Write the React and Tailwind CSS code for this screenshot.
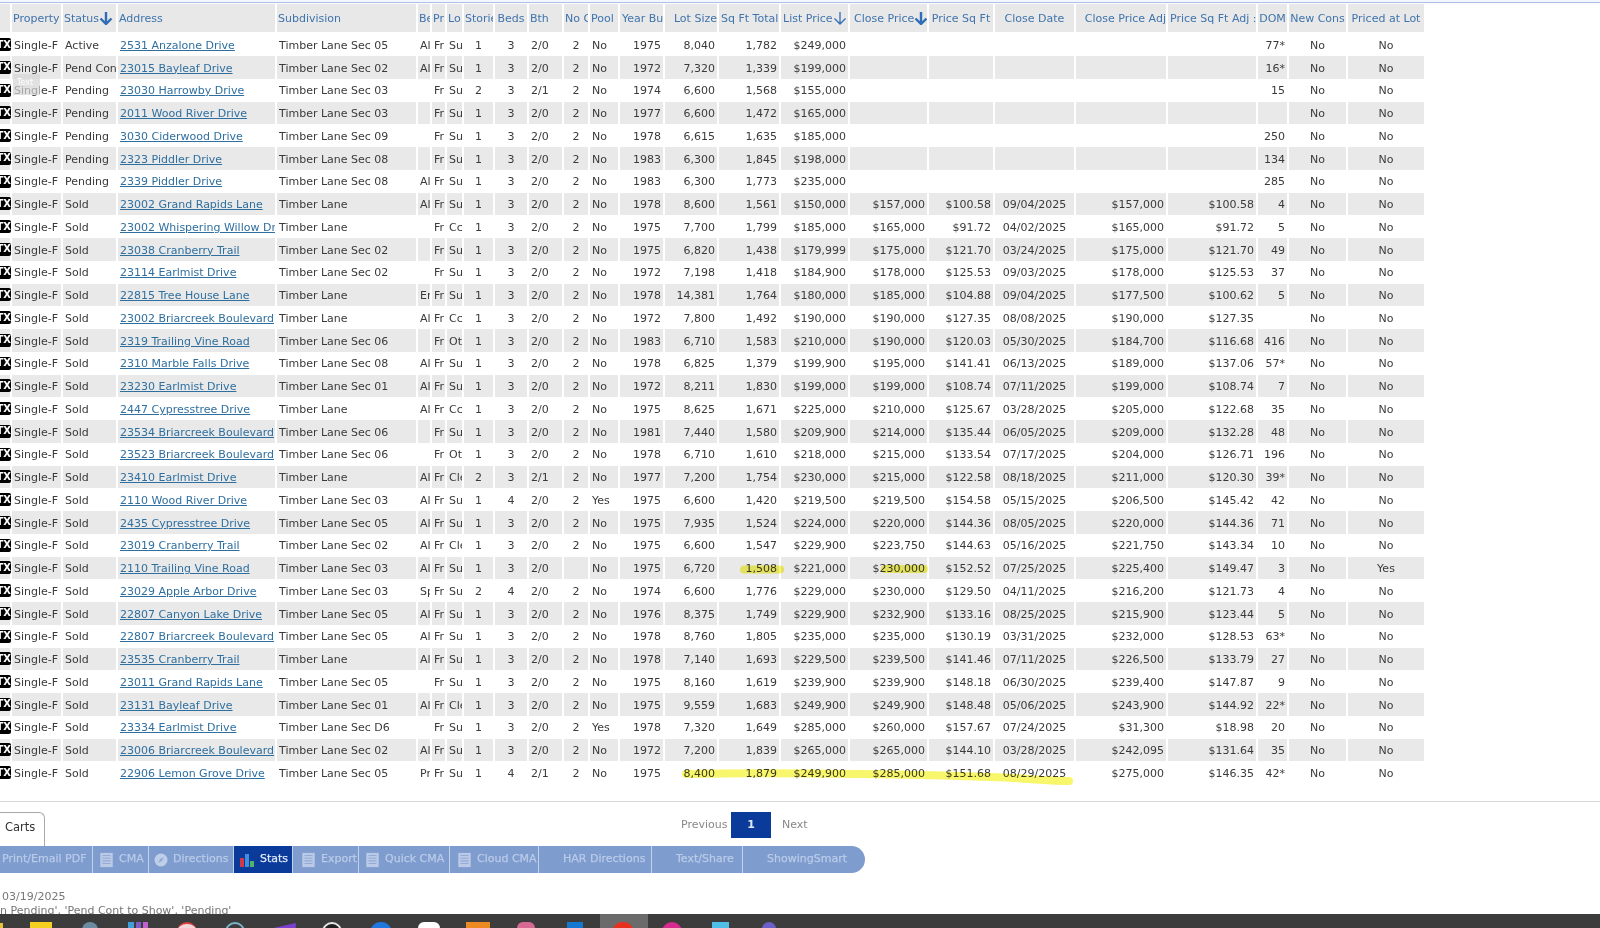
import React from "react";

const raw = `Active|2531 Anzalone Drive|Timber Lane Sec 05|All|Sub|1|3|2/0|2|No|1975|8,040|1,782|$249,000||||||77*|No
Pend Cont to Show|23015 Bayleaf Drive|Timber Lane Sec 02|All|Sub|1|3|2/0|2|No|1972|7,320|1,339|$199,000||||||16*|No
Pending|23030 Harrowby Drive|Timber Lane Sec 03||Sub|2|3|2/1|2|No|1974|6,600|1,568|$155,000||||||15|No
Pending|2011 Wood River Drive|Timber Lane Sec 03||Sub|1|3|2/0|2|No|1977|6,600|1,472|$165,000|||||||No
Pending|3030 Ciderwood Drive|Timber Lane Sec 09||Sub|1|3|2/0|2|No|1978|6,615|1,635|$185,000||||||250|No
Pending|2323 Piddler Drive|Timber Lane Sec 08||Sub|1|3|2/0|2|No|1983|6,300|1,845|$198,000||||||134|No
Pending|2339 Piddler Drive|Timber Lane Sec 08|All|Sub|1|3|2/0|2|No|1983|6,300|1,773|$235,000||||||285|No
Sold|23002 Grand Rapids Lane|Timber Lane|All|Sub|1|3|2/0|2|No|1978|8,600|1,561|$150,000|$157,000|$100.58|09/04/2025|$157,000|$100.58|4|No
Sold|23002 Whispering Willow Drive|Timber Lane||Cc|1|3|2/0|2|No|1975|7,700|1,799|$185,000|$165,000|$91.72|04/02/2025|$165,000|$91.72|5|No
Sold|23038 Cranberry Trail|Timber Lane Sec 02||Sub|1|3|2/0|2|No|1975|6,820|1,438|$179,999|$175,000|$121.70|03/24/2025|$175,000|$121.70|49|No
Sold|23114 Earlmist Drive|Timber Lane Sec 02||Sub|1|3|2/0|2|No|1972|7,198|1,418|$184,900|$178,000|$125.53|09/03/2025|$178,000|$125.53|37|No
Sold|22815 Tree House Lane|Timber Lane|Er|Sub|1|3|2/0|2|No|1978|14,381|1,764|$180,000|$185,000|$104.88|09/04/2025|$177,500|$100.62|5|No
Sold|23002 Briarcreek Boulevard|Timber Lane|All|Cc|1|3|2/0|2|No|1972|7,800|1,492|$190,000|$190,000|$127.35|08/08/2025|$190,000|$127.35||No
Sold|2319 Trailing Vine Road|Timber Lane Sec 06||Ot|1|3|2/0|2|No|1983|6,710|1,583|$210,000|$190,000|$120.03|05/30/2025|$184,700|$116.68|416|No
Sold|2310 Marble Falls Drive|Timber Lane Sec 08|All|Sub|1|3|2/0|2|No|1978|6,825|1,379|$199,900|$195,000|$141.41|06/13/2025|$189,000|$137.06|57*|No
Sold|23230 Earlmist Drive|Timber Lane Sec 01|All|Sub|1|3|2/0|2|No|1972|8,211|1,830|$199,000|$199,000|$108.74|07/11/2025|$199,000|$108.74|7|No
Sold|2447 Cypresstree Drive|Timber Lane|All|Cc|1|3|2/0|2|No|1975|8,625|1,671|$225,000|$210,000|$125.67|03/28/2025|$205,000|$122.68|35|No
Sold|23534 Briarcreek Boulevard|Timber Lane Sec 06||Sub|1|3|2/0|2|No|1981|7,440|1,580|$209,900|$214,000|$135.44|06/05/2025|$209,000|$132.28|48|No
Sold|23523 Briarcreek Boulevard|Timber Lane Sec 06||Ot|1|3|2/0|2|No|1978|6,710|1,610|$218,000|$215,000|$133.54|07/17/2025|$204,000|$126.71|196|No
Sold|23410 Earlmist Drive|Timber Lane|All|Cle|2|3|2/1|2|No|1977|7,200|1,754|$230,000|$215,000|$122.58|08/18/2025|$211,000|$120.30|39*|No
Sold|2110 Wood River Drive|Timber Lane Sec 03|All|Sub|1|4|2/0|2|Yes|1975|6,600|1,420|$219,500|$219,500|$154.58|05/15/2025|$206,500|$145.42|42|No
Sold|2435 Cypresstree Drive|Timber Lane Sec 05|All|Sub|1|3|2/0|2|No|1975|7,935|1,524|$224,000|$220,000|$144.36|08/05/2025|$220,000|$144.36|71|No
Sold|23019 Cranberry Trail|Timber Lane Sec 02|All|Cle|1|3|2/0|2|No|1975|6,600|1,547|$229,900|$223,750|$144.63|05/16/2025|$221,750|$143.34|10|No
Sold|2110 Trailing Vine Road|Timber Lane Sec 03|All|Sub|1|3|2/0||No|1975|6,720|1,508|$221,000|$230,000|$152.52|07/25/2025|$225,400|$149.47|3|Yes
Sold|23029 Apple Arbor Drive|Timber Lane Sec 03|Sp|Sub|2|4|2/0|2|No|1974|6,600|1,776|$229,000|$230,000|$129.50|04/11/2025|$216,200|$121.73|4|No
Sold|22807 Canyon Lake Drive|Timber Lane Sec 05|All|Sub|1|3|2/0|2|No|1976|8,375|1,749|$229,900|$232,900|$133.16|08/25/2025|$215,900|$123.44|5|No
Sold|22807 Briarcreek Boulevard|Timber Lane Sec 05|All|Sub|1|3|2/0|2|No|1978|8,760|1,805|$235,000|$235,000|$130.19|03/31/2025|$232,000|$128.53|63*|No
Sold|23535 Cranberry Trail|Timber Lane|All|Sub|1|3|2/0|2|No|1978|7,140|1,693|$229,500|$239,500|$141.46|07/11/2025|$226,500|$133.79|27|No
Sold|23011 Grand Rapids Lane|Timber Lane Sec 05||Sub|1|3|2/0|2|No|1975|8,160|1,619|$239,900|$239,900|$148.18|06/30/2025|$239,400|$147.87|9|No
Sold|23131 Bayleaf Drive|Timber Lane Sec 01|All|Cle|1|3|2/0|2|No|1975|9,559|1,683|$249,900|$249,900|$148.48|05/06/2025|$243,900|$144.92|22*|No
Sold|23334 Earlmist Drive|Timber Lane Sec D6||Sub|1|3|2/0|2|Yes|1978|7,320|1,649|$285,000|$260,000|$157.67|07/24/2025|$31,300|$18.98|20|No
Sold|23006 Briarcreek Boulevard|Timber Lane Sec 02|All|Sub|1|3|2/0|2|No|1972|7,200|1,839|$265,000|$265,000|$144.10|03/28/2025|$242,095|$131.64|35|No
Sold|22906 Lemon Grove Drive|Timber Lane Sec 05|Pr|Sub|1|4|2/1|2|No|1975|8,400|1,879|$249,900|$285,000|$151.68|08/29/2025|$275,000|$146.35|42*|No`;

const rows = raw.split("\n").map((l) => l.split("|"));

const Arrow = ({ bold }) => (
  <svg viewBox="0 0 14 14" className="inline-block w-[14px] h-[14px] align-[-3px] shrink-0" fill="none" stroke="#2f6db5" strokeWidth={bold ? 2.4 : 1.3}>
    <path d="M7 1v12M1.5 7.5 7 13l5.5-5.5" />
  </svg>
);

const cols = [
  { w: "w-[10px]", h: "" },
  { w: "w-[49px]", h: "Property", ha: "text-left pl-px", a: "text-left pl-[2px]" },
  { w: "w-[53px]", h: "Status", arrow: true, ha: "text-left pl-px", a: "text-left pl-[2px]" },
  { w: "w-[157px]", h: "Address", ha: "text-left pl-px", a: "text-left pl-[2px]" },
  { w: "w-[139px]", h: "Subdivision", ha: "text-left pl-px", a: "text-left pl-[2px]" },
  { w: "w-[12px]", h: "Bedrooms", ha: "text-left pl-px", a: "text-left pl-[2px]" },
  { w: "w-[13px]", h: "Pr", ha: "text-left pl-px", a: "text-left pl-[2px]" },
  { w: "w-[15px]", h: "Lo", ha: "text-left pl-px", a: "text-left pl-[2px]" },
  { w: "w-[29px]", h: "Stories", ha: "text-left pl-px", a: "text-center" },
  { w: "w-[32px]", h: "Beds", ha: "text-center", a: "text-center" },
  { w: "w-[33px]", h: "Bth", ha: "text-left pl-px", a: "text-left pl-[2px]" },
  { w: "w-[24px]", h: "No Car", ha: "text-left pl-px", a: "text-center" },
  { w: "w-[28px]", h: "Pool", ha: "text-left pl-px", a: "text-left pl-[2px]" },
  { w: "w-[43px]", h: "Year Built", ha: "text-left pl-[2px]", a: "text-right pr-[2px]" },
  { w: "w-[52px]", h: "Lot Size", ha: "text-right", a: "text-right pr-[2px]" },
  { w: "w-[60px]", h: "Sq Ft Total", ha: "text-left pl-[2px]", a: "text-right pr-[2px]" },
  { w: "w-[67px]", h: "List Price", arrow: "thin", ha: "text-left pl-[2px]", a: "text-right pr-[2px]" },
  { w: "w-[77px]", h: "Close Price", arrow: true, ha: "text-left pl-[4px]", a: "text-right pr-[2px]" },
  { w: "w-[64px]", h: "Price Sq Ft", ha: "text-center", a: "text-right pr-[2px]" },
  { w: "w-[79px]", h: "Close Date", ha: "text-center", a: "text-center" },
  { w: "w-[90px]", h: "Close Price Adj", ha: "text-right", a: "text-right pr-[2px]" },
  { w: "w-[88px]", h: "Price Sq Ft Adj :", ha: "text-left pl-[2px]", a: "text-right pr-[2px]" },
  { w: "w-[29px]", h: "DOM", ha: "text-center", a: "text-right pr-[2px]" },
  { w: "w-[57px]", h: "New Cons", ha: "text-center", a: "text-center" },
  { w: "w-[76px]", h: "Priced at Lot", ha: "text-center", a: "text-center" },
];

const TxBadge = () => (
  <span className="flex justify-end items-center h-[13px] w-[11px] bg-black rounded-r-[2px] overflow-hidden text-white font-bold text-[10px] leading-none">
    TX
  </span>
);

const Doc = () => (
  <svg viewBox="0 0 16 18" className="w-[15px] h-[16px] shrink-0">
    <rect x="1" y="1" width="14" height="16" fill="#b9c9e6" />
    <path d="M3.500 4h9M3.500 7h9M3.500 10h9M3.500 13h9" stroke="#94abd8" strokeWidth="1.200" />
  </svg>
);

const Tool = ({ w, icon, label, active, last, pad }) => (
  <div
    className={`${w} ${pad} h-full flex items-center gap-[5px] overflow-hidden whitespace-nowrap [-webkit-text-stroke:0.25px_currentColor] ${active ? "bg-[#0a3a9a] text-[#dfe8f8]" : "text-[#b9cbe8]"} ${last ? "" : "border-r border-[#c3d2eb]"}`}
  >
    {icon}
    <span>{label}</span>
  </div>
);

const slots = [
  <div key="b" className="w-[22px] h-[10px] bg-[#f5d020]" />,
  <div key="c" className="w-[16px] h-[10px] rounded-t-full bg-[#6c8ba0]" />,
  <div key="d" className="w-[20px] h-[10px] flex gap-[2px]"><span className="w-[6px] h-full bg-[#3f9fd8]" /><span className="w-[6px] h-full bg-[#7d5cc6]" /><span className="w-[6px] h-full bg-[#c25fd0]" /></div>,
  <div key="e" className="w-[20px] h-[10px] rounded-t-full bg-[#f0d8d8] border-t-2 border-[#d84040]" />,
  <div key="f" className="w-[20px] h-[12px] rounded-t-full border-2 border-[#7eb2c8]" />,
  <div key="g" className="w-[24px] h-[9px] mt-[1px] bg-[#7b3fd0] [clip-path:polygon(0_60%,100%_0,100%_100%,0_100%)]" />,
  <div key="h" className="w-[20px] h-[12px] rounded-t-full border-2 border-[#e8e8e8] bg-[#202020]" />,
  <div key="i" className="w-[22px] h-[12px] rounded-t-full bg-[#1e78e0]" />,
  <div key="j" className="w-[22px] h-[12px] rounded-t-[6px] bg-white" />,
  <div key="k" className="w-[24px] h-[11px] bg-[#ee8a22]" />,
  <div key="l" className="w-[18px] h-[11px] rounded-t-[6px] bg-[#d76a93]" />,
  <div key="m" className="w-[16px] h-[11px] bg-[#1478d0]" />,
  <div key="n" className="w-[22px] h-[12px] rounded-t-full bg-[#e8301f]" />,
  <div key="o" className="w-[20px] h-[12px] rounded-t-full bg-[#d82a8e]" />,
  <div key="p" className="w-[17px] h-[11px] bg-[#50bfe8]" />,
  <div key="q" className="w-[14px] h-[10px] rounded-t-full bg-[#6a5fc8]" />,
];

export default function App() {
  return (
    <div className="relative w-[1600px] h-[928px] overflow-hidden bg-white flex flex-col font-['DejaVu_Sans',sans-serif] text-[11px] text-[#3a3a3a]">
      <div className="h-[3px] bg-[#f3f6fc] border-b border-[#a9bfe3] shrink-0" />
      <div className="h-px shrink-0" />
      <table className="table-fixed w-[1428px] ml-[-2px] border-separate border-spacing-x-[2px] border-spacing-y-0 shrink-0">
        <colgroup>
          {cols.map((c, i) => (
            <col key={i} className={c.w} />
          ))}
        </colgroup>
        <thead>
          <tr className="h-[29.25px]">
            {cols.map((c, i) => (
              <th key={i} className={`bg-[#e8e8e8] border-b-[1.25px] border-white pt-[2px] font-normal text-[#3f74ad] overflow-hidden whitespace-nowrap ${c.ha || ""}`}>
                {c.h}
                {c.arrow && <Arrow bold={c.arrow === true} />}
              </th>
            ))}
          </tr>
        </thead>
        <tbody>
          {rows.map((r, ri) => {
            const bg = ri % 2 === 1 ? "bg-[#e9e9e9]" : "bg-white";
            const vals = ["Single-F", r[0], r[1], r[2], r[3], "Fr", r[4], ...r.slice(5, 10), r[10], ...r.slice(11, 19), r[19], "No", r[20]];
            return (
              <tr key={ri} className="h-[22.75px]">
                <td className={`${bg} p-0`}>
                  <TxBadge />
                </td>
                {vals.map((v, i) => {
                  const c = cols[i + 1];
                  return (
                    <td key={i} className={`${bg} pt-[3px] overflow-hidden whitespace-nowrap ${c.a}`}>
                      {i === 2 ? <a href="#" className="text-[#2f6f9f] underline">{v}</a> : v}
                    </td>
                  );
                })}
              </tr>
            );
          })}
        </tbody>
      </table>

      <div className="mt-[17px] border-t border-[#d8d8d8] h-[11px] shrink-0" />

      <div className="flex h-[34px] shrink-0">
        <div className="w-[45px] h-[34px] border border-l-0 border-b-0 border-[#a8a8a8] rounded-tr-[6px] pl-[5px] pt-[6px] text-[#333] text-[11.500px]">Carts</div>
        <div className="ml-[636px] flex h-[26px] items-center text-[#888] text-[11px]">
          <span className="w-[46px] whitespace-nowrap">Previous</span>
          <span className="ml-[4px] w-[40px] h-[26px] bg-[#0a3a9a] text-[#dfe8f8] font-bold flex items-center justify-center">1</span>
          <span className="ml-[11px]">Next</span>
        </div>
      </div>

      <div className="w-[865px] h-[27px] shrink-0 flex rounded-r-full bg-[#7f9ccf] overflow-hidden text-[11px]">
        <Tool w="w-[93px]" pad="pl-[2px]" label="Print/Email PDF" />
        <Tool w="w-[56px]" pad="pl-[6px]" icon={<Doc />} label="CMA" />
        <Tool w="w-[85px]" pad="pl-[5px]" label="Directions" icon={<svg viewBox="0 0 14 14" className="w-[14px] h-[14px] shrink-0"><circle cx="7" cy="7" r="6.500" fill="#c0cfe9" /><path d="M4 10l2-4 4-2-2 4z" fill="#94abd8" /></svg>} />
        <Tool w="w-[59px]" pad="pl-[6px]" active label="Stats" icon={<svg viewBox="0 0 15 14" className="w-[15px] h-[14px] shrink-0"><rect x="0" y="5" width="4" height="9" fill="#d0394a" /><rect x="5" y="1" width="4" height="13" fill="#3f8ee0" /><rect x="10" y="8" width="4" height="6" fill="#4fb36a" /></svg>} />
        <Tool w="w-[66px]" pad="pl-[8px]" icon={<Doc />} label="Export" />
        <Tool w="w-[91px]" pad="pl-[6px]" icon={<Doc />} label="Quick CMA" />
        <Tool w="w-[89px]" pad="pl-[7px]" icon={<Doc />} label="Cloud CMA" />
        <Tool w="w-[113px]" pad="pl-[24px]" label="HAR Directions" />
        <Tool w="w-[91px]" pad="pl-[24px]" label="Text/Share" />
        <Tool w="w-[122px]" pad="pl-[24px]" last label="ShowingSmart" />
      </div>

      <div className="mt-[16px] pl-[2px] text-[11px] text-[#777] whitespace-nowrap leading-[15px]">03/19/2025</div>
      <div className="text-[11px] text-[#777] whitespace-nowrap leading-[14px]">n Pending', 'Pend Cont to Show', 'Pending'</div>

      <div className="absolute left-0 right-0 bottom-0 h-[14px] bg-[#3c3c3c] flex pl-[17px] overflow-hidden">
        <div className="absolute left-0 top-[9px] w-[3px] h-[5px] bg-[#e8c23a]" />
        <div className="absolute left-[600px] top-0 w-[48px] h-[14px] bg-[#6b6b6b]" />
        {slots.map((s, i) => (
          <div key={i} className="relative w-[48.500px] shrink-0 flex justify-center pt-[8px]">
            {s}
          </div>
        ))}
      </div>

      <div className="absolute left-[13px] top-[74px] w-[27px] h-[21px] bg-[#d4d4d4]/70 text-white text-[8px] pl-[4px] pt-[3px]">Text</div>

      <svg className="absolute left-0 top-0 w-[1600px] h-[928px] pointer-events-none mix-blend-multiply" viewBox="0 0 1600 928" fill="none" stroke="#f8f66a" strokeLinecap="round">
        <path d="M744 569.500H780" strokeWidth="8" />
        <path d="M885 569H924" strokeWidth="8" />
        <path d="M686 774C780 772 880 774 960 776S1040 781 1069 781" strokeWidth="8" />
      </svg>
    </div>
  );
}
